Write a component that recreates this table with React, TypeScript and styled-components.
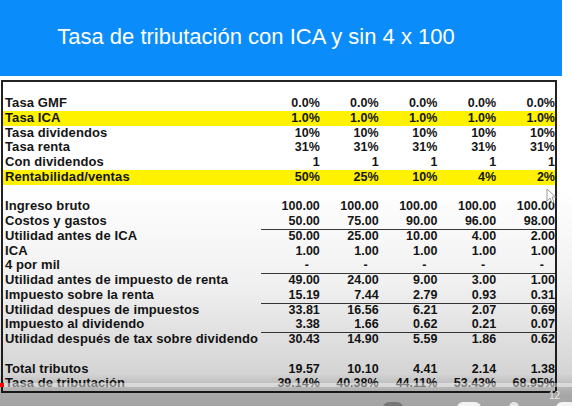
import React from 'react'
import styled, { createGlobalStyle } from 'styled-components'

const GlobalStyle = createGlobalStyle`
    html, body {
        margin: 0;
        padding: 0;
        background: #ffffff;
    }
    body {
        font-family: 'Liberation Sans', Arial, sans-serif;
    }
`

const Page = styled.div`
    position: relative;
    width: 572px;
    height: 406px;
    overflow: hidden;
    background: #ffffff;
`

const Slide = styled.div`
    width: 562px;
    display: flex;
    flex-direction: column;
`

const Header = styled.div`
    height: 76px;
    background: #0a8cfa;
    display: flex;
    align-items: center;
    justify-content: center;
    padding-right: 50px;
    margin-bottom: 4px;
`

const Title = styled.h1`
    margin: 0;
    font-size: 22px;
    font-weight: 400;
    color: #ffffff;
    font-family: 'Liberation Sans', Arial, sans-serif;
    padding-bottom: 3px;
`

const Sheet = styled.div`
    margin-left: 1px;
    width: 552px;
    border: 2px solid #222;
    padding-top: 14px;
    display: flex;
    flex-direction: column;
`

const Row = styled.div<{ $highlight?: boolean }>`
    display: grid;
    grid-template-columns: 254px 1fr;
    height: 14.75px;
    line-height: 14.75px;
    background: ${p => (p.$highlight ? '#fff200' : 'transparent')};
    font-weight: 700;
    color: #151515;
`

const Label = styled.div`
    padding-left: 2px;
    font-size: 13px;
    letter-spacing: 0.1px;
    white-space: nowrap;
`

const Values = styled.div<{ $rule?: boolean }>`
    display: grid;
    grid-template-columns: repeat(5, 1fr);
    margin-left: 4px;
    border-bottom: ${p => (p.$rule ? '1px solid #3a3a3a' : '1px solid transparent')};
    box-sizing: border-box;
`

const Cell = styled.div<{ $dash?: boolean }>`
    text-align: right;
    font-size: 12.5px;
    padding-right: ${p => (p.$dash ? '11px' : '0')};
`

const Blank = styled.div`
    height: 14.75px;
`

const Shade = styled.div`
    position: absolute;
    inset: 0;
    pointer-events: none;
    background: linear-gradient(
        to bottom,
        rgba(0, 0, 0, 0) 46%,
        rgba(0, 0, 0, 0.06) 70%,
        rgba(0, 0, 0, 0.17) 92%,
        rgba(0, 0, 0, 0.34) 97%,
        rgba(0, 0, 0, 0.36) 100%
    );
`

const Progress = styled.div`
    position: absolute;
    left: 0;
    right: 0;
    top: 383px;
    height: 4px;
    background: rgba(255, 255, 255, 0.45);
    &::before {
        content: '';
        position: absolute;
        left: 0;
        top: 0;
        width: 4px;
        height: 4px;
        background: #ff0000;
    }
`

const Controls = styled.div`
    position: absolute;
    left: 0;
    right: 0;
    top: 397px;
    height: 20px;
    display: flex;
    align-items: flex-start;
    padding-left: 383px;
    pointer-events: none;
`

const Knob = styled.div<{ $w: number; $gap: number; $tone: string }>`
    flex: none;
    margin-left: ${p => p.$gap}px;
    margin-top: 5px;
    width: ${p => p.$w}px;
    height: 14px;
    border-radius: 6px 6px 2px 2px;
    background: ${p => p.$tone};
`

const Counter = styled.span`
    flex: none;
    margin-left: 30px;
    margin-top: -7px;
    font-size: 10px;
    color: #e8e8e8;
    font-family: 'Liberation Sans', Arial, sans-serif;
`

const Cursor = styled.svg`
    position: absolute;
    left: 546px;
    top: 188px;
`

type Line = { label?: string; values?: string[]; highlight?: boolean; rule?: boolean; dash?: boolean }

const five = (v: string) => [v, v, v, v, v]

const lines: Line[] = [
    { label: 'Tasa GMF', values: five('0.0%') },
    { label: 'Tasa ICA', values: five('1.0%'), highlight: true },
    { label: 'Tasa dividendos', values: five('10%') },
    { label: 'Tasa renta', values: five('31%') },
    { label: 'Con dividendos', values: five('1') },
    { label: 'Rentabilidad/ventas', values: ['50%', '25%', '10%', '4%', '2%'], highlight: true },
    {},
    { label: 'Ingreso bruto', values: five('100.00') },
    { label: 'Costos y gastos', values: ['50.00', '75.00', '90.00', '96.00', '98.00'], rule: true },
    { label: 'Utilidad antes de ICA', values: ['50.00', '25.00', '10.00', '4.00', '2.00'] },
    { label: 'ICA', values: five('1.00') },
    { label: '4 por mil', values: five('-'), rule: true, dash: true },
    { label: 'Utilidad antes de impuesto de renta', values: ['49.00', '24.00', '9.00', '3.00', '1.00'] },
    { label: 'Impuesto sobre la renta', values: ['15.19', '7.44', '2.79', '0.93', '0.31'], rule: true },
    { label: 'Utilidad despues de impuestos', values: ['33.81', '16.56', '6.21', '2.07', '0.69'] },
    { label: 'Impuesto al dividendo', values: ['3.38', '1.66', '0.62', '0.21', '0.07'], rule: true },
    { label: 'Utilidad después de tax sobre dividendo', values: ['30.43', '14.90', '5.59', '1.86', '0.62'] },
    {},
    { label: 'Total tributos', values: ['19.57', '10.10', '4.41', '2.14', '1.38'] },
    { label: 'Tasa de tributación', values: ['39.14%', '40.38%', '44.11%', '53.43%', '68.95%'] },
]

const App = () => {
    return (
        <Page>
            <GlobalStyle />
            <Slide>
                <Header>
                    <Title>Tasa de tributación con ICA y sin 4 x 100</Title>
                </Header>
                <Sheet>
                    {lines.map((line, i) =>
                        line.label ? (
                            <Row key={i} $highlight={line.highlight}>
                                <Label>{line.label}</Label>
                                <Values $rule={line.rule}>
                                    {line.values!.map((v, j) => (
                                        <Cell key={j} $dash={line.dash}>
                                            {v}
                                        </Cell>
                                    ))}
                                </Values>
                            </Row>
                        ) : (
                            <Blank key={i} />
                        )
                    )}
                </Sheet>
            </Slide>
            <Cursor width="10" height="16" viewBox="0 0 10 16">
                <path d="M1 1 L1 13 L4 10 L6 15 L8 14 L6 9 L9.5 9 Z" fill="#fff" stroke="#999" strokeWidth="1" />
            </Cursor>
            <Shade />
            <Progress />
            <Controls>
                <Knob $gap={0} $w={20} $tone="rgba(90,90,90,0.6)" />
                <Knob $gap={54} $w={24} $tone="#f2f2f2" />
                <Knob $gap={28} $w={10} $tone="#e6e6e6" />
                <Counter>12</Counter>
                <Knob $gap={-4} $w={20} $tone="#f4f4f4" />
            </Controls>
        </Page>
    )
}

export default App
